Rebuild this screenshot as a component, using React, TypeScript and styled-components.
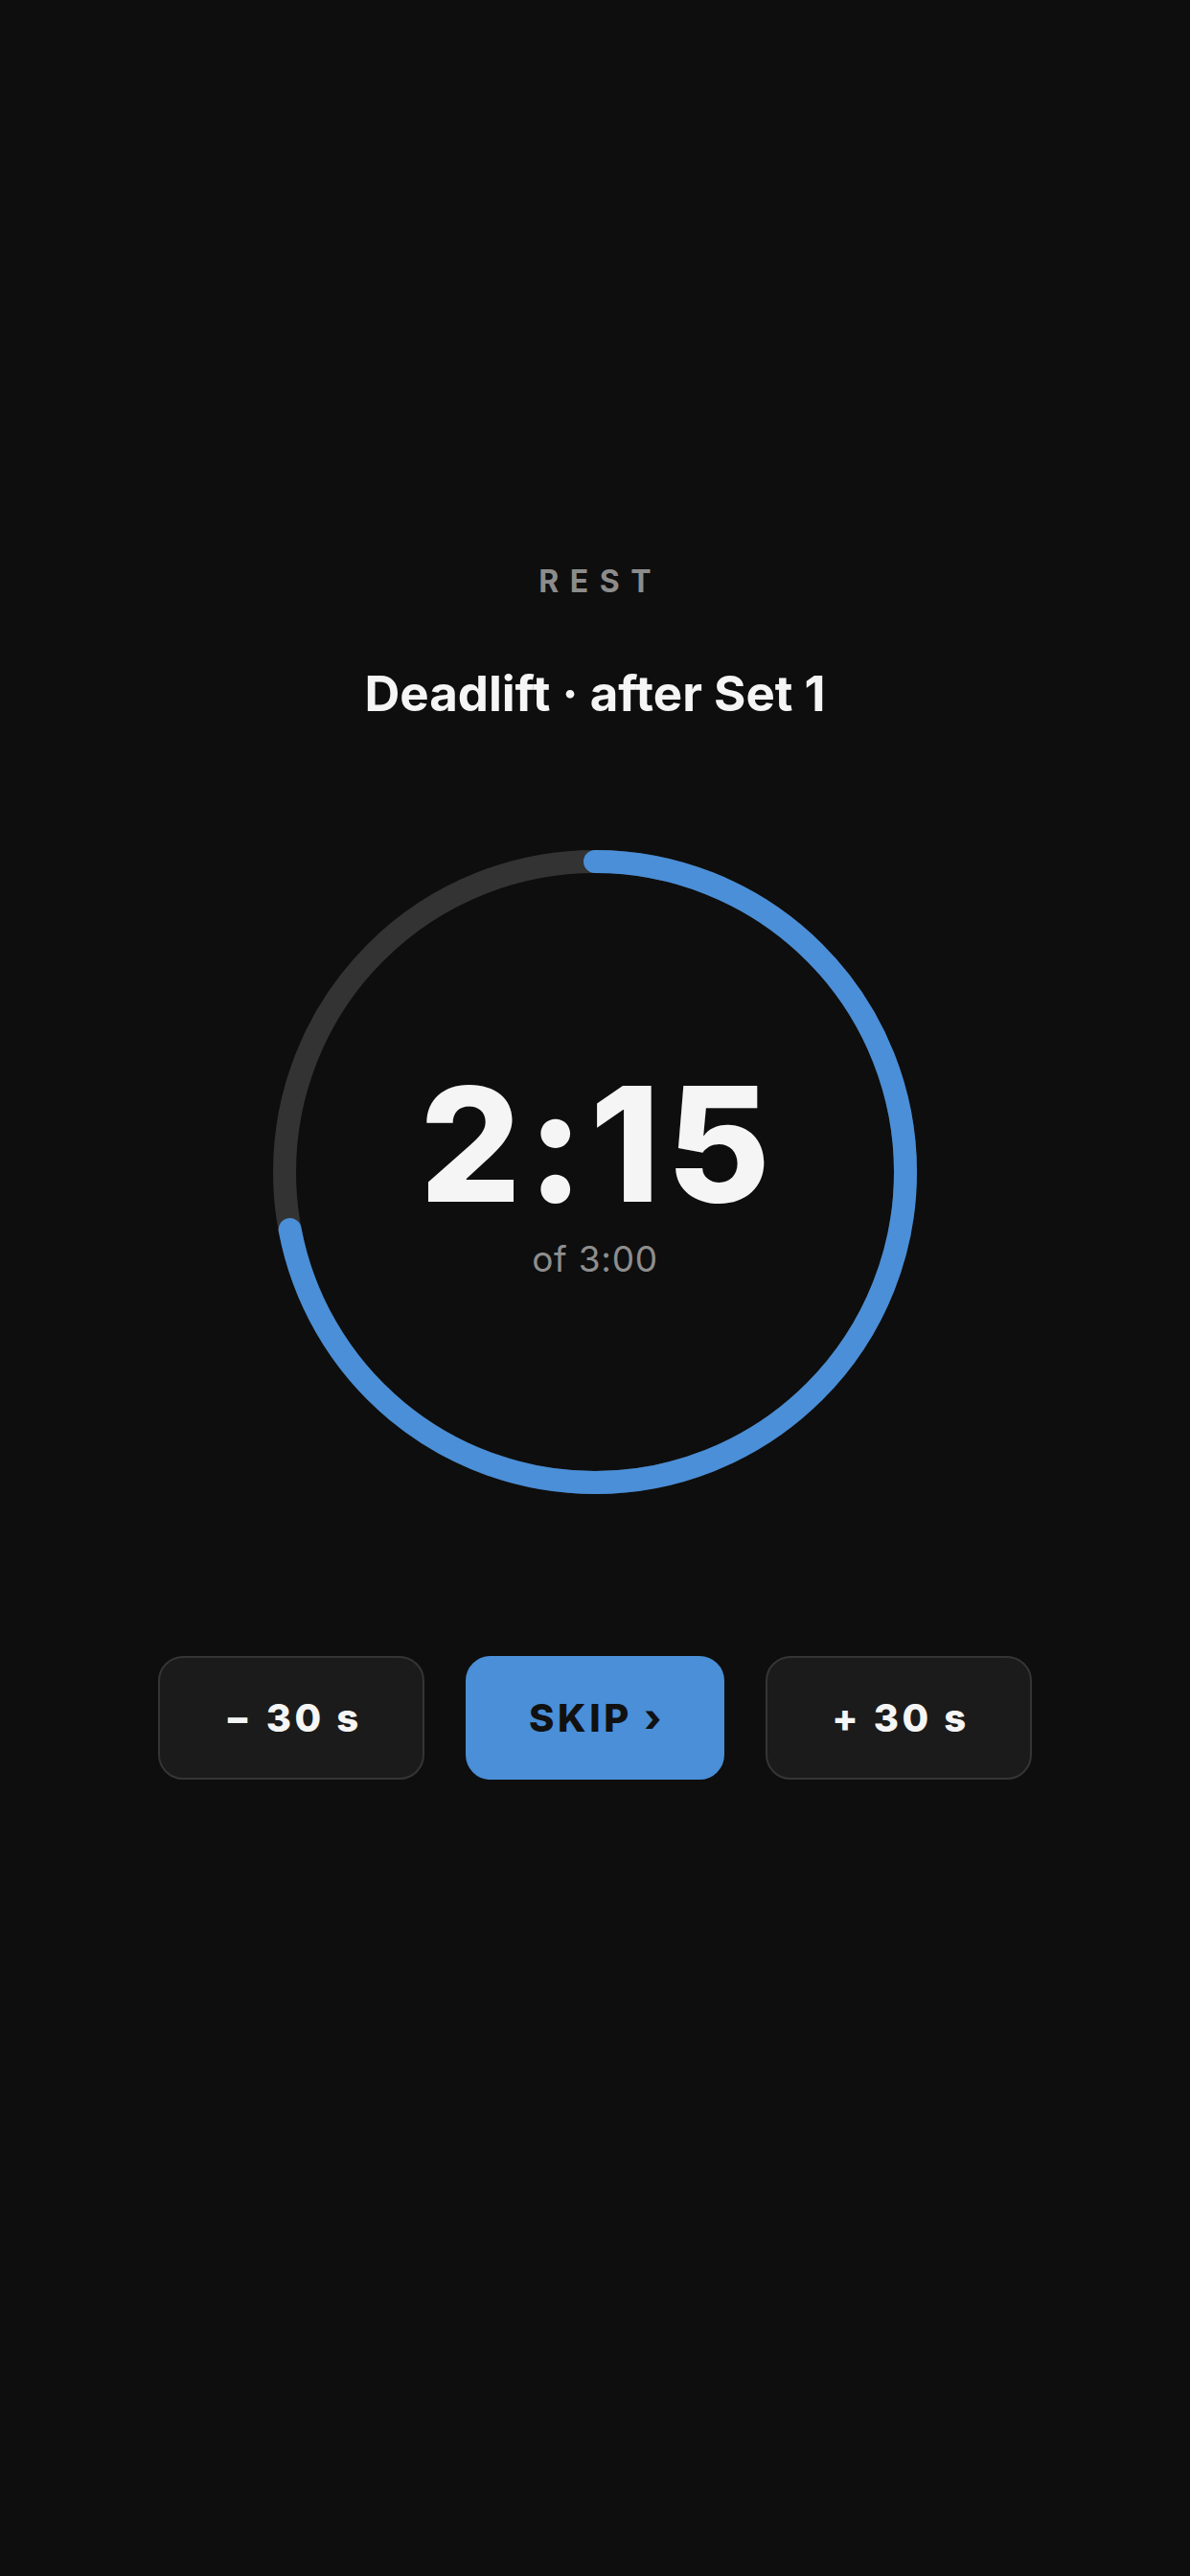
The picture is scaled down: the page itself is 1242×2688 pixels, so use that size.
import styled, { createGlobalStyle } from 'styled-components'

const GlobalStyle = createGlobalStyle`
  * {
    box-sizing: border-box;
  }
  html, body {
    margin: 0;
    padding: 0;
    background: #0e0e0e;
  }
  body {
    font-family: Inter, 'Noto Sans', 'Liberation Sans', sans-serif;
    color: #f5f5f5;
    -webkit-font-smoothing: antialiased;
  }
`

const RING_SIZE = 672
const RING_STROKE = 24
const RING_RADIUS = (RING_SIZE - RING_STROKE) / 2
const CIRCUMFERENCE = 2 * Math.PI * RING_RADIUS

interface ProgressRingProps {
  progress: number
}

function ProgressRing({ progress }: ProgressRingProps) {
  const c = RING_SIZE / 2
  return (
    <RingSvg
      width={RING_SIZE}
      height={RING_SIZE}
      viewBox={`0 0 ${RING_SIZE} ${RING_SIZE}`}
    >
      <circle
        cx={c}
        cy={c}
        r={RING_RADIUS}
        fill="none"
        stroke="#333333"
        strokeWidth={RING_STROKE}
      />
      <circle
        cx={c}
        cy={c}
        r={RING_RADIUS}
        fill="none"
        stroke="#4a8fd8"
        strokeWidth={RING_STROKE}
        strokeLinecap="round"
        strokeDasharray={`${CIRCUMFERENCE * progress} ${CIRCUMFERENCE}`}
        transform={`rotate(-90 ${c} ${c})`}
      />
    </RingSvg>
  )
}

function App() {
  return (
    <>
      <GlobalStyle />
      <Screen>
        <Label>REST</Label>
        <Title>Deadlift · after Set 1</Title>

        <Ring>
          <ProgressRing progress={0.72} />
          <Readout>
            <Time>2:15</Time>
            <Total>of 3:00</Total>
          </Readout>
        </Ring>

        <Controls>
          <ActionButton $width={278}>− 30 s</ActionButton>
          <ActionButton $width={270} $primary>
            SKIP ›
          </ActionButton>
          <ActionButton $width={278}>+ 30 s</ActionButton>
        </Controls>
      </Screen>
    </>
  )
}

export default App

const Screen = styled.main`
  display: flex;
  flex-direction: column;
  align-items: center;
  min-height: 2688px;
  padding-top: 591px;
`

const Label = styled.div`
  font-size: 32px;
  line-height: 1;
  font-weight: 700;
  letter-spacing: 0.36em;
  padding-left: 0.36em;
  color: #8c8c8c;
`

const Title = styled.h1`
  margin: 75px 0 0;
  font-size: 51px;
  line-height: 1;
  font-weight: 700;
  letter-spacing: 0;
  color: #f5f5f5;
`

const Ring = styled.div`
  display: grid;
  margin-top: 138px;
  width: ${RING_SIZE}px;
  height: ${RING_SIZE}px;

  & > * {
    grid-area: 1 / 1;
  }
`

const RingSvg = styled.svg`
  display: block;
`

const Readout = styled.div`
  display: flex;
  flex-direction: column;
  align-items: center;
  justify-content: center;
  padding-bottom: 4px;
`

const Time = styled.div`
  font-size: 166px;
  line-height: 1;
  font-weight: 800;
  letter-spacing: 0.04em;
  padding-left: 0.04em;
  color: #f5f5f5;
`

const Total = styled.div`
  margin-top: 18px;
  font-size: 37px;
  line-height: 1;
  font-weight: 400;
  letter-spacing: 0.02em;
  color: #8e8e8e;
`

const Controls = styled.div`
  display: flex;
  gap: 43px;
  margin-top: 169px;
`

const ActionButton = styled.button<{ $width: number; $primary?: boolean }>`
  display: flex;
  align-items: center;
  justify-content: center;
  width: ${(props) => props.$width}px;
  height: 129px;
  padding: 0 0 0 0.1em;
  border-radius: 26px;
  border: 2px solid ${(props) => (props.$primary ? '#4a8fd8' : '#353535')};
  background: ${(props) => (props.$primary ? '#4a8fd8' : '#1b1b1b')};
  color: ${(props) => (props.$primary ? '#111111' : '#f5f5f5')};
  font-family: inherit;
  font-size: 40px;
  font-weight: 800;
  letter-spacing: 0.09em;
  cursor: pointer;
`
